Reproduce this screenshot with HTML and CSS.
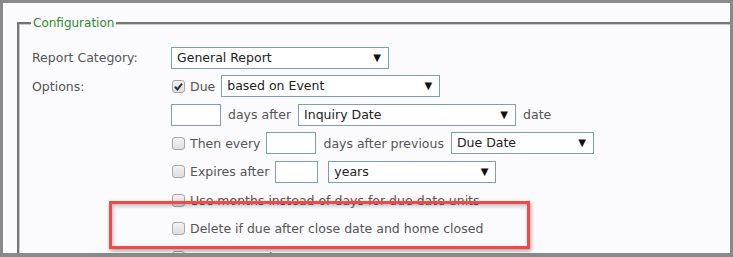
FILE: index.html
```html
<!DOCTYPE html>
<html>
<head>
<meta charset="utf-8">
<link rel="stylesheet" href="styles.css">
</head>
<body>
<div class="frame">
  <fieldset class="config">
    <legend>Configuration</legend>
    <div class="lines">
      <div class="line">
        <div class="label">Report Category:</div>
        <div class="select w-cat">General Report<span class="arrow">▼</span></div>
      </div>
      <div class="line">
        <div class="label">Options:</div>
        <span class="cb checked"><svg viewBox="0 0 13 13" width="13" height="13"><path d="M3 6.8 L5.4 9.4 L10 3.6" fill="none" stroke="#333" stroke-width="2"/></svg></span>
        <span class="txt">Due</span>
        <div class="select w-due">based on Event<span class="arrow">▼</span></div>
      </div>
      <div class="line">
        <div class="label"></div>
        <div class="input w50"></div>
        <span class="txt gap">days after</span>
        <div class="select w-inq">Inquiry Date<span class="arrow">▼</span></div>
        <span class="txt gap">date</span>
      </div>
      <div class="line">
        <div class="label"></div>
        <span class="cb"></span>
        <span class="txt">Then every</span>
        <div class="input w50"></div>
        <span class="txt gap">days after previous</span>
        <div class="select w-prev">Due Date<span class="arrow">▼</span></div>
      </div>
      <div class="line">
        <div class="label"></div>
        <span class="cb"></span>
        <span class="txt">Expires after</span>
        <div class="input w43"></div>
        <div class="select w-years">years<span class="arrow">▼</span></div>
      </div>
      <div class="line">
        <div class="label"></div>
        <span class="cb"></span>
        <span class="txt">Use months instead of days for due date units</span>
      </div>
      <div class="line">
        <div class="label"></div>
        <span class="cb"></span>
        <span class="txt">Delete if due after close date and home closed</span>
      </div>
      <div class="line">
        <div class="label"></div>
        <span class="cb"></span>
        <span class="txt">Recreate on home reopen</span>
      </div>
    </div>
  </fieldset>
  <div class="highlight"></div>
</div>
</body>
</html>
```
FILE: styles.css
```css
html, body {
  margin: 0;
  padding: 0;
  background: #fbfbfd;
}
.frame {
  position: relative;
  width: 733px;
  height: 257px;
  box-sizing: border-box;
  border: 3px solid #898989;
  border-bottom-width: 4px;
  background: #fbfbfd;
  overflow: hidden;
  padding: 11px 0 0 14px;
  font-family: "DejaVu Sans", Verdana, sans-serif;
  font-size: 12.5px;
  color: #555;
}
.config {
  margin: 0;
  width: 760px;
  box-sizing: border-box;
  border: 2px solid #767676;
  border-right: none;
  border-bottom: none;
  box-shadow: inset 1px 1px 0 #c9c9c9;
  padding: 14.5px 0 0 13px;
  min-width: 0;
}
.config legend {
  padding: 0 2px;
  margin-left: -1px;
  font-size: 12px;
  color: #2f8a2f;
  background: #fbfbfd;
  line-height: 18px;
}
.lines {
  display: flex;
  flex-direction: column;
  gap: 6.5px;
}
.line {
  display: flex;
  align-items: center;
  height: 22px;
  white-space: nowrap;
}
.label {
  width: 139px;
  flex: none;
}
.select {
  position: relative;
  height: 22px;
  box-sizing: border-box;
  border: 1px solid #7f9db9;
  background: #fff;
  padding-left: 5px;
  line-height: 20px;
  color: #222;
  flex: none;
}
.select .arrow {
  position: absolute;
  right: 7px;
  top: 0;
  font-size: 10px;
  color: #111;
}
.w-cat { width: 218px; }
.w-due { width: 219px; margin-left: 6px; }
.w-inq { width: 218px; }
.w-prev { width: 143px; }
.w-years { width: 168px; margin-left: 10px; }
.input {
  height: 22px;
  box-sizing: border-box;
  border: 1px solid #7f9db9;
  background: #fff;
  flex: none;
}
.w50 { width: 50px; }
.w43 { width: 43px; margin-left: 7px; }
.cb {
  width: 13px;
  height: 13px;
  box-sizing: border-box;
  border: 1px solid #a8a8a8;
  border-radius: 3px;
  background: linear-gradient(#f3f3f3, #dedede);
  margin: 0 5px 0 1px;
  flex: none;
  display: flex;
}
.cb svg {
  margin: -1px;
}
.txt + .input { margin-left: 6px; }
.txt.gap { margin: 0 7px 0 7px; }
.highlight {
  position: absolute;
  left: 106px;
  top: 198px;
  width: 421px;
  height: 48px;
  box-sizing: border-box;
  border: 3px solid #f24848;
  box-shadow: 1px 2px 4px rgba(0,0,0,0.35), inset 1px 2px 4px rgba(0,0,0,0.25);
}
```
